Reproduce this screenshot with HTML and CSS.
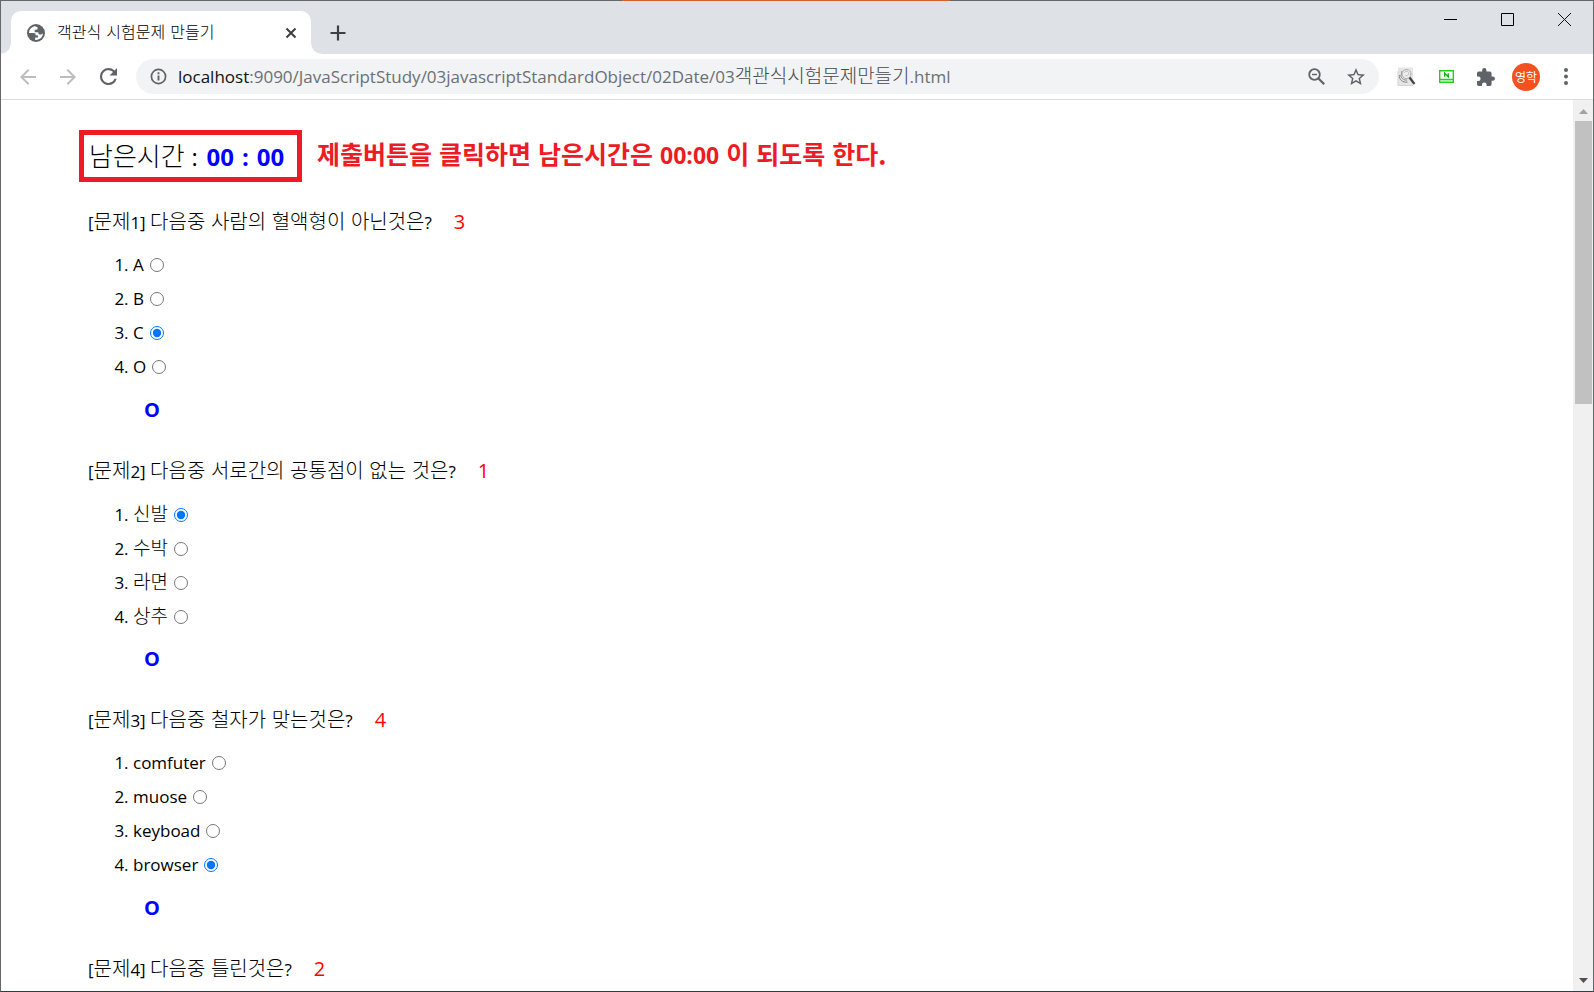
FILE: index.html
```html
<!DOCTYPE html>
<html lang="ko">
<head>
<meta charset="utf-8">
<title>객관식 시험문제 만들기</title>
<link rel="stylesheet" href="styles.css">
</head>
<body>
<div class="accent"></div>
<div class="window">
  <header class="tabstrip">
    <div class="tab">
      <svg class="globe" viewBox="0 0 18 18" width="18" height="18"><circle cx="9" cy="9" r="9" fill="#5f6368"/><path d="M8 2.2C4.600 2.600 2 5.400 2 9l4.600.1c1.700 0 2 .9 2 2.200H10c.7 0 1 .5 1 1.200v1h-2.800v2.400c4.200.5 7.700-2.700 7.800-6.600-.7.9-1.500 1.300-2.700 1.200-1.500 0-2-.9-2-2.300h-3.600V5.700h1.600c1 0 1.400-.5 1.300-1.400V3.200L8 2.200z" fill="#fff"/></svg>
      <span class="tab-title">객관식 시험문제 만들기</span>
      <button class="plain" aria-label="탭 닫기"><svg viewBox="0 0 12 12" width="12" height="12"><path d="M1.500 1.500l9 9m0-9l-9 9" stroke="#3c4043" stroke-width="2"/></svg></button>
    </div>
    <button class="plain new-tab" aria-label="새 탭"><svg viewBox="0 0 16 16" width="16" height="16"><path d="M8 .5v15M.5 8h15" stroke="#3c4043" stroke-width="2.200"/></svg></button>
    <div class="controls">
      <button class="plain" aria-label="최소화"><svg viewBox="0 0 13 13" width="13" height="13"><path d="M0 6.500h13" stroke="#000"/></svg></button>
      <button class="plain" aria-label="최대화"><svg viewBox="0 0 13 13" width="13" height="13"><path d="M.5.5h12v12H.5z" fill="none" stroke="#000"/></svg></button>
      <button class="plain" aria-label="닫기"><svg viewBox="0 0 13 13" width="13" height="13"><path d="M0 0l13 13M13 0L0 13" stroke="#111"/></svg></button>
    </div>
  </header>
  <nav class="toolbar">
    <div class="nav-buttons">
      <button class="plain" aria-label="뒤로"><svg viewBox="4 4 16 16" width="16" height="16"><path d="M20 11H7.830l5.590-5.590L12 4l-8 8 8 8 1.410-1.410L7.830 13H20z" fill="#bbbdbf"/></svg></button>
      <button class="plain" aria-label="앞으로"><svg viewBox="4 4 16 16" width="16" height="16"><path d="M4 13h12.170l-5.590 5.590L12 20l8-8-8-8-1.410 1.410L16.170 11H4z" fill="#bbbdbf"/></svg></button>
      <button class="plain" aria-label="새로고침"><svg viewBox="4 4 16 16" width="17" height="17"><path d="M17.650 6.350A7.960 7.960 0 0 0 12 4a8 8 0 1 0 7.730 10h-2.080A6 6 0 1 1 12 6c1.660 0 3.140.690 4.220 1.780L13 11h7V4z" fill="#5f6368"/></svg></button>
    </div>
    <div class="omnibox">
      <svg viewBox="0 0 18 18" width="17" height="17"><circle cx="9" cy="9" r="7.500" fill="none" stroke="#5f6368" stroke-width="1.800"/><path d="M9 4.500v2M9 8v5.200" stroke="#5f6368" stroke-width="2"/></svg>
      <div class="url"><b>localhost</b>:9090/JavaScriptStudy/03javascriptStandardObject/02Date/03<span class="ko">객관식시험문제만들기</span>.html</div>
      <button class="plain" aria-label="축소"><svg viewBox="0 0 17 17" width="17" height="17"><circle cx="6.500" cy="6.500" r="5.300" fill="none" stroke="#5f6368" stroke-width="1.800"/><path d="M10.500 10.500l5.700 5.700" stroke="#5f6368" stroke-width="2.200"/><path d="M4 6.500h5" stroke="#5f6368" stroke-width="1.400"/></svg></button>
      <button class="plain" aria-label="북마크"><svg viewBox="2 2 20 20" width="18" height="18"><path d="M22 9.240l-7.190-.620L12 2 9.190 8.630 2 9.240l5.460 4.730L5.820 21 12 17.270 18.180 21l-1.630-7.030zM12 15.400l-3.760 2.270 1-4.280-3.320-2.880 4.380-.380L12 6.100l1.710 4.040 4.380.380-3.320 2.880 1 4.280z" fill="#5f6368"/></svg></button>
    </div>
    <div class="extensions">
      <button class="plain" aria-label="검색 도구"><svg viewBox="0 0 19 20" width="19" height="20"><path d="M1 .5h15v18H1z" fill="#e6e6e6"/><path d="M1 4v14.500h15" fill="none" stroke="#d4d4d4"/><g fill="none" stroke="#858585"><path d="M2.500 8c-1 4 3 8 8 7M4 7.500c-.8 3 2.500 6 6 5.500M5 4c-1 2 0 5 2 6"/><circle cx="9.500" cy="7" r="4.500" fill="#eee" stroke="#aaa"/><path d="M7.500 6c0-2 3-2.500 4-.5 1 2-1 3.500-3 3" stroke="#bbb"/></g><path d="M12.500 10.500l5 6.500" stroke="#444" stroke-width="2.200"/></svg></button>
      <button class="plain" aria-label="화면 캡처"><svg viewBox="0 0 15 13" width="15" height="13"><path d="M.7.700h13.600v11.600H.7zM1 9.500h13" fill="#fff" stroke="#25cf21" stroke-width="1.400"/><path d="M5.700 6.800V3.200l3.600 3.600V3.200" fill="none" stroke="#18b518" stroke-width="1.500"/><path d="M3 11h9" stroke="#8be788"/></svg></button>
      <button class="plain" aria-label="확장 프로그램"><svg viewBox="2 1 21 21" width="18" height="18"><path d="M20.500 11H19V7a2 2 0 0 0-2-2h-4V3.500a2.500 2.500 0 0 0-5 0V5H4a2 2 0 0 0-2 2v3.800h1.500a2.700 2.700 0 0 1 0 5.400H2V20a2 2 0 0 0 2 2h3.800v-1.500a2.700 2.700 0 0 1 5.400 0V22H17a2 2 0 0 0 2-2v-4h1.500a2.500 2.500 0 0 0 0-5z" fill="#5f6368"/></svg></button>
      <button class="plain"><span class="avatar">영학</span></button>
      <button class="plain" aria-label="메뉴"><svg viewBox="0 0 4 17" width="4" height="17" fill="#5f6368"><circle cx="2" cy="2" r="2"/><circle cx="2" cy="8.500" r="2"/><circle cx="2" cy="15" r="2"/></svg></button>
    </div>
  </nav>
  <div class="viewport">
    <main class="page">
      <div class="status">
        <div class="timer">남은시간 <span class="separator">:</span> <strong>00<span class="colon">:</span>00</strong></div>
        <p class="note">제출버튼을 클릭하면 남은시간은 <span class="clock">00:00</span> 이 되도록 한다.</p>
      </div>
      <section class="question">
        <h2>[<span class="ko">문제</span>1] <span class="ko">다음중 사람의 혈액형이 아닌것은</span>?<span class="answer">3</span></h2>
        <ol>
          <li><label for="a1">A</label><input type="radio" id="a1" name="q1"></li>
          <li><label for="a2">B</label><input type="radio" id="a2" name="q1"></li>
          <li><label for="a3">C</label><input type="radio" id="a3" name="q1" checked></li>
          <li><label for="a4">O</label><input type="radio" id="a4" name="q1"></li>
        </ol>
        <p class="verdict">O</p>
      </section>
      <section class="question">
        <h2>[<span class="ko">문제</span>2] <span class="ko">다음중 서로간의 공통점이 없는 것은</span>?<span class="answer">1</span></h2>
        <ol>
          <li><label class="ko" for="b1">신발</label><input type="radio" id="b1" name="q2" checked></li>
          <li><label class="ko" for="b2">수박</label><input type="radio" id="b2" name="q2"></li>
          <li><label class="ko" for="b3">라면</label><input type="radio" id="b3" name="q2"></li>
          <li><label class="ko" for="b4">상추</label><input type="radio" id="b4" name="q2"></li>
        </ol>
        <p class="verdict">O</p>
      </section>
      <section class="question">
        <h2>[<span class="ko">문제</span>3] <span class="ko">다음중 철자가 맞는것은</span>?<span class="answer">4</span></h2>
        <ol>
          <li><label for="c1">comfuter</label><input type="radio" id="c1" name="q3"></li>
          <li><label for="c2">muose</label><input type="radio" id="c2" name="q3"></li>
          <li><label for="c3">keyboad</label><input type="radio" id="c3" name="q3"></li>
          <li><label for="c4">browser</label><input type="radio" id="c4" name="q3" checked></li>
        </ol>
        <p class="verdict">O</p>
      </section>
      <section class="question">
        <h2>[<span class="ko">문제</span>4] <span class="ko">다음중 틀린것은</span>?<span class="answer">2</span></h2>
      </section>
    </main>
    <div class="scrollbar">
      <svg viewBox="0 0 9 5" width="9" height="5"><path d="M4.500 0L9 5H0z" fill="#a3a3a3"/></svg>
      <div class="track"><div class="thumb"></div></div>
      <svg viewBox="0 0 9 5" width="9" height="5"><path d="M0 0h9L4.500 5z" fill="#505050"/></svg>
    </div>
  </div>
</div>
</body>
</html>
```
FILE: styles.css
```css
* { box-sizing: border-box; }
body { margin: 0; font-family: "Open Sans", "Noto Sans CJK KR", sans-serif; color: #000; }
.plain { border: 0; padding: 0; background: none; display: flex; align-items: center; justify-content: center; flex: none; }
svg { display: block; flex: none; }
.window { height: 100vh; display: flex; flex-direction: column; overflow: hidden; border: 1px solid #66676b; border-bottom-color: #2b3f4a; background: #fff; }
.accent { position: absolute; top: 0; left: 39%; width: 328px; height: 1px; background: #d0622d; }

.tabstrip { flex: none; height: 53px; display: flex; background: #dee1e6; padding-left: 10px; }
.tab { position: relative; width: 300px; margin-top: 10px; padding: 0 14px 0 16px; display: flex; align-items: center; background: #fff; border-radius: 10px 10px 0 0; }
.tab::before, .tab::after { content: ""; position: absolute; bottom: 0; width: 10px; height: 10px; }
.tab::before { right: 100%; background: radial-gradient(circle at 0 0, #dee1e6 9px, #fff 10px); }
.tab::after { left: 100%; background: radial-gradient(circle at 100% 0, #dee1e6 9px, #fff 10px); }
.tab-title { flex: 1; margin-left: 12px; font: 300 16px/20px "DejaVu Sans", "Noto Sans CJK KR", sans-serif; color: #000; }
.new-tab { width: 54px; height: 43px; margin-top: 10px; }
.controls { margin-left: auto; display: flex; align-items: flex-start; }
.controls .plain { width: 57px; height: 37px; }

.toolbar { flex: none; height: 46px; display: flex; align-items: center; border-bottom: 1px solid #dadce0; padding-right: 7px; }
.nav-buttons { display: flex; gap: 24px; padding: 0 19px 0 19px; }
.omnibox { flex: 1; min-width: 0; height: 35px; display: flex; align-items: center; gap: 22px; padding: 0 14px; background: #f1f3f4; border-radius: 18px; }
.url { flex: 1; margin-left: -11px; font-size: 17px; line-height: 32px; color: #6b6f74; white-space: nowrap; }
.url b { font-weight: 400; color: #111; }
.url .ko { font: 300 19px/24px "Noto Sans CJK KR", sans-serif; color: #44484c; }
.extensions { display: flex; align-items: center; margin-left: 7px; }
.extensions .plain { width: 40px; height: 40px; }
.avatar { width: 28px; height: 28px; border-radius: 50%; background: #f4511e; color: #fff; font: 12px/28px "Noto Sans CJK KR", sans-serif; }

.viewport { flex: 1; min-height: 0; display: flex; }
.page { flex: 1; min-width: 0; overflow: hidden; padding: 30px 24px 0 78px; }
.status { display: flex; margin-bottom: 22px; gap: 15px; }
.timer { border: 5px solid #ed1c24; width: 223px; height: 52px; padding-left: 5px; font: 300 26px/42px "Open Sans", "Noto Sans CJK KR", sans-serif; white-space: nowrap; }
.timer strong { margin-left: 2px; color: #00f; font-size: 24px; font-weight: 700; }
.separator { font-size: 24px; font-weight: 400; }
.colon { margin: 0 8px; }
.note { margin: 0; color: #ed1c24; font: 700 25px/46px "Noto Sans CJK KR", sans-serif; white-space: nowrap; }
.clock { font-family: "Open Sans", sans-serif; font-size: 23px; }
.question { margin-bottom: 26px; font-size: 17px; line-height: 34px; }
.question h2 { height: 34px; margin: 0 0 10px; padding-left: 9px; font-size: 17px; font-weight: 400; white-space: nowrap; }
.question h2 .ko { font: 300 20px/34px "Noto Sans CJK KR", sans-serif; }
.question li .ko { font: 300 19px/34px "DejaVu Sans", "Noto Sans CJK KR", sans-serif; }
.answer { margin-left: 22px; color: #f00; font-size: 20px; }
.question ol { margin: 0; padding-left: 54px; }
.question li { height: 34px; }
.question input { width: 14px; height: 14px; margin: 0 0 0 6px; vertical-align: -1px; }
.verdict { height: 34px; margin: 9px 0 0; padding-left: 65px; color: #00f; font-size: 20px; font-weight: 700; }

.scrollbar { width: 20px; display: flex; flex-direction: column; align-items: center; background: #f0f0f0; padding: 9px 0 8px; }
.track { flex: 1; width: 17px; margin: 7px 0; }
.thumb { height: calc(100% / 3); background: #c1c1c1; }
```
